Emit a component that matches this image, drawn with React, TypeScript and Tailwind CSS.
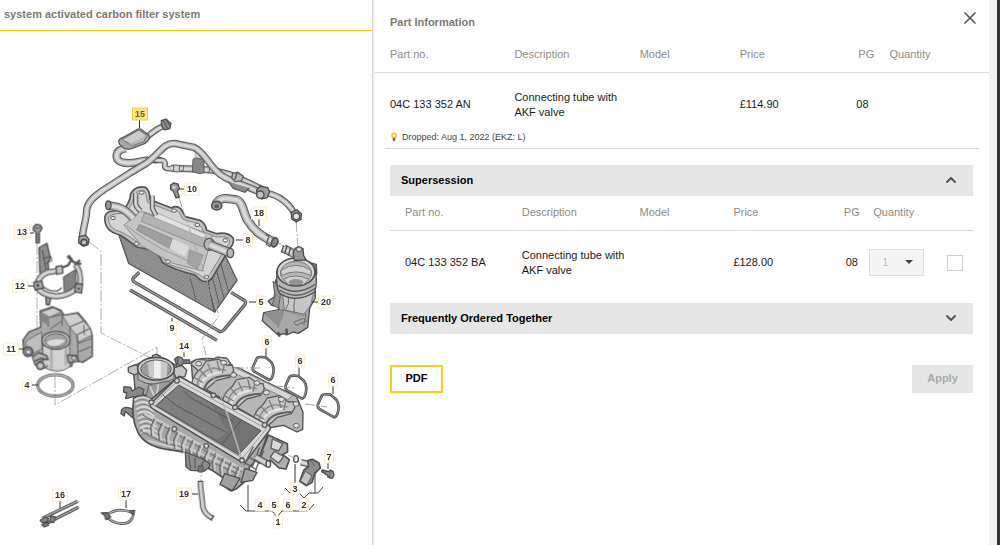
import React, { useState } from "react";
import { X, ChevronUp, ChevronDown } from "lucide-react";

interface Callout {
  no: string;
  x: number;
  y: number;
  line?: string;
  active?: boolean;
}

const callouts: Callout[] = [
  { no: "15", x: 140, y: 114, line: "M139.5 120v8", active: true },
  { no: "10", x: 192, y: 189, line: "M179 189h7" },
  { no: "18", x: 259, y: 213, line: "M259 219v7" },
  { no: "8", x: 248, y: 240, line: "M236 240h8" },
  { no: "13", x: 22, y: 232, line: "M28 233h6" },
  { no: "12", x: 20, y: 286, line: "M26 286h8" },
  { no: "11", x: 11, y: 349, line: "M17 349h7" },
  { no: "4", x: 27, y: 385, line: "M31 385h7" },
  { no: "5", x: 261, y: 302, line: "M249 302h8" },
  { no: "20", x: 326, y: 302, line: "M312 302h8" },
  { no: "9", x: 172, y: 328, line: "M172 318v5" },
  { no: "14", x: 184, y: 346, line: "M184 351v6" },
  { no: "6", x: 267, y: 342, line: "M266 348v8" },
  { no: "6", x: 300, y: 361, line: "M299 367v8" },
  { no: "6", x: 333, y: 380, line: "M333 386v8" },
  { no: "7", x: 329, y: 457, line: "M328 463v6" },
  { no: "3", x: 295, y: 489, line: "M295 464v19" },
  { no: "19", x: 184, y: 494, line: "M190 494h8" },
  { no: "16", x: 60, y: 495, line: "M60 501v7" },
  { no: "17", x: 126, y: 494, line: "M126 500v8" },
  { no: "4", x: 260, y: 505 },
  { no: "5", x: 274, y: 505 },
  { no: "6", x: 288, y: 505 },
  { no: "2", x: 304, y: 505 },
  { no: "1", x: 278, y: 522 },
];

// tube drawn as outline + body + highlight
function Pipe({ d, w }: { d: string; w: number }) {
  return (
    <g fill="none" strokeLinejoin="round">
      <path d={d} stroke="#3c3c3c" strokeWidth={w} />
      <path d={d} stroke="#a3a3a3" strokeWidth={w - 6} />
      <path d={d} stroke="#d3d3d3" strokeWidth={(w - 5) / 2} />
    </g>
  );
}

function Tubes() {
  return (
    <g transform="translate(70 100) scale(.33333)">
      <Pipe w={19} d="M226 116C244 100 254 88 286 76" />
      <path d="M274 62l14-5 15 14-4 15-16 3-8-10z" fill="#777" stroke="#333" strokeWidth="4" />
      <path d="M280 62l12 22M289 59l10 18" stroke="#333" strokeWidth="3" />
      <Pipe w={25} d="M168 145C132 148 132 184 160 188C190 193 200 184 235 181" />
      <Pipe w={17} d="M228 181H276Q289 184 284 198Q284 207 302 206" />
      <path d="M235 175l40-2M232 186l30 2" stroke="#333" strokeWidth="4" />
      <path d="M146 124q2-8 14-12l45-25q8-1 11 3l20 15q6 8-2 17l-9 8-40 16q-16 4-24-2l-13-12z" fill="#9a9a9a" stroke="#444" strokeWidth="4" />
      <path d="M157 117l50-27 24 16-9 19-37 13z" fill="#aaa" stroke="#5c5c5c" strokeWidth="3" />
      <path d="M160 119l46-26 20 15-42 21z" fill="#c4c4c4" />
      <Pipe w={21} d="M302 205L375 207L430 211L480 224L530 246L590 275" />
      <path d="M311 195l17 1v20l-17-1zM341 198l-3 18M420 203l-4 17" fill="#ccc" stroke="#444" strokeWidth="3" />
      <path d="M376 157h16l9 10-3 14h-24z" fill="#d2d2d2" stroke="#888" strokeWidth="2" />
      <path d="M369 178l10-4 23 5v39l-10 3-25-5z" fill="#747474" stroke="#444" strokeWidth="3" />
      <Pipe w={22} d="M38 415C34 400 51 355 50 330C53 302 80 285 100 270L180 219L230 189C270 160 280 129 313 130L372 142C405 158 412 190 450 223C480 246 520 252 572 278" />
      <path d="M475 245l15 20 35 12 13-13" fill="#777" stroke="#444" strokeWidth="4" />
      <path d="M488 220l15-3 17 12-6 14-19 2-10-11zM502 219l-8 20" fill="#aaa" stroke="#444" strokeWidth="4" />
      <Pipe w={20} d="M572 278C610 277 654 302 674 342" />
      <path d="M560 270l10-11 23 4 6 14-8 16-17 4-13-9z" fill="#909090" stroke="#333" strokeWidth="4" />
      <circle cx="571" cy="284" r="11" fill="#bbb" stroke="#333" strokeWidth="4" />
      <path d="M664 336l17-7 13 12-1 17-14 8-14-9z" fill="#888" stroke="#333" strokeWidth="4" />
      <circle cx="679" cy="349" r="10" fill="#ddd" stroke="#333" strokeWidth="4" />
      <path d="M27 410l20-4 10 12-3 16-14 5-14-10z" fill="#9c9c9c" stroke="#333" strokeWidth="4" />
      <circle cx="42" cy="427" r="9" fill="#bbb" stroke="#333" strokeWidth="5" />
      {/* hose 18 */}
      <Pipe w={27} d="M437 313C452 284 483 299 499 299C522 307 519 345 535 364C550 390 570 405 607 424" />
      <ellipse cx="440" cy="317" rx="15" ry="13" fill="#8a8a8a" stroke="#333" strokeWidth="5" />
      <ellipse cx="440" cy="319" rx="7" ry="6" fill="#444" />
      <path d="M588 405l9 2-8 26 11 7 16-29" fill="none" stroke="#444" strokeWidth="4" />
      <ellipse cx="614" cy="427" rx="9" ry="14" fill="#777" stroke="#333" strokeWidth="5" transform="rotate(20 614 427)" />
      {/* screw 10 */}
      <path d="M302 255l9-6 13 3 4 13-6 9 6 17-10 3-8-20-8-6z" fill="#888" stroke="#333" strokeWidth="4" />
      <circle cx="312" cy="262" r="5" fill="#ccc" />
    </g>
  );
}

function Cooler() {
  return (
    <g transform="translate(100 175) scale(.33333)" strokeLinejoin="round">
      <path d="M56 178l30 87 258 146-18-92z" fill="#959595" stroke="#333" strokeWidth="4" />
      <path d="M56 178l30 87 258 146-18-92z" fill="url(#fins)" />
      <path d="M324 318l52-76 35 74-67 95z" fill="#a2a2a2" stroke="#333" strokeWidth="4" />
      <path d="M324 318l52-76 35 74-67 95z" fill="url(#fins)" />
      <path d="M336 302l23 90M349 283l24 90M362 264l24 88M270 308l18 66" stroke="#444" strokeWidth="3" fill="none" />
      <path
        d="M15 124Q20 108 40 108L68 104Q90 88 92 56Q108 30 136 37Q150 45 150 74L215 99Q228 90 243 102L256 125L300 136Q317 146 320 166L350 176Q384 170 400 190Q403 207 388 221L338 306Q323 330 299 313L285 300Q220 284 188 263Q176 236 156 225L110 216Q80 192 60 180Q10 168 15 124Z"
        fill="#b7b7b7"
        stroke="#383838"
        strokeWidth="5"
      />
      <path
        d="M25 128Q28 117 70 114Q98 98 102 62Q114 42 132 47Q140 55 142 82L215 110Q232 102 238 114L249 133L294 146Q308 158 312 173L350 186Q380 182 390 194Q390 207 377 218L330 298Q320 314 304 304Q290 290 224 274Q200 267 191 250Q180 226 155 214L116 205Q90 183 66 172Q24 162 25 128Z"
        fill="#cdcdcd"
        stroke="#727272"
        strokeWidth="3"
      />
      <path d="M72 150l50-42 215 72-30 108-92-24-90-52z" fill="#bababa" stroke="#777" strokeWidth="3" />
      <path d="M134 113l186 77-12 26-184-77z" fill="#a6a6a6" stroke="#666" strokeWidth="2" />
      <path d="M168 112l150 66-6 12-153-64z" fill="#dedede" stroke="#888" strokeWidth="2" />
      <path d="M118 148l100 44-10 28-98-55z" fill="#909090" stroke="#666" strokeWidth="2" />
      <path d="M218 192l50 22-12 32-48-26z" fill="#d4d4d4" />
      <path d="M268 224l42 17-17 40-30-15z" fill="#949494" stroke="#777" strokeWidth="2" />
      <path d="M80 152q40 34 110 72l85 38" fill="none" stroke="#888" strokeWidth="3" />
      <Pipe w={26} d="M24 91L55 97Q80 105 100 130" />
      <ellipse cx="25" cy="91" rx="8" ry="13" fill="#888" stroke="#333" strokeWidth="4" />
      <Pipe w={16} d="M107 54V85Q107 96 122 108" />
      <Pipe w={15} d="M157 62V100L168 122" />
      <ellipse cx="328" cy="208" rx="16" ry="18" fill="#a8a8a8" stroke="#444" strokeWidth="4" />
      <Pipe w={28} d="M328 209L388 233" />
      <ellipse cx="391" cy="234" rx="10" ry="14" fill="#aaa" stroke="#333" strokeWidth="4" />
      {[[39, 129], [125, 53], [222, 107], [292, 150], [376, 196], [319, 306], [204, 260], [110, 206]].map(([x, y]) => (
        <ellipse key={x} cx={x} cy={y} rx="7" ry="5" fill="#efefef" stroke="#444" strokeWidth="3" />
      ))}
      {/* seal frame 5 and rod 9 */}
      {["M118 292L101 308Q94 316 106 323L355 467Q366 473 373 463L435 388Q440 380 431 375L393 352", "M90 345L351 496"].map((d) => (
        <g key={d} fill="none">
          <path d={d} stroke="#333" strokeWidth="10" />
          <path d={d} stroke="#8d8d8d" strokeWidth="4" />
        </g>
      ))}
    </g>
  );
}

function Regulator() {
  return (
    <g transform="translate(100 175) scale(.33333)" strokeLinejoin="round">
      <path d="M527 315l-4 50-18 13 10 13 20 4 3 9-47 9-4 24 47 43 18-4 8 4 20-9 15 4 28-18 6-58 17-30 0-37z" fill="#999" stroke="#333" strokeWidth="4" />
      <path d="M519 318l25 25-9 58-18-14 8-24z" fill="#838383" stroke="#444" strokeWidth="3" />
      <path d="M547 350q40 26 95-2l-10 42-24 32-55-17z" fill="#bdbdbd" stroke="#666" strokeWidth="3" />
      <path d="M565 367q5 20-8 35M585 370q-6 24-2 43M493 417l57-13 68 15M550 405l-16 54M618 419l-7 32M581 441l30-11 9 8-32 13z" fill="none" stroke="#555" strokeWidth="3" />
      <path d="M498 412l42-7 12 11-16 40-39-35z" fill="#7d7d7d" />
      <path d="M534 471l5 14M559 461l2 19" stroke="#333" strokeWidth="7" />
      <path d="M628 263l21 5 1 30-12-7z" fill="#777" stroke="#333" strokeWidth="4" />
      <path d="M531 290q-4 48 8 65 50 32 105-4 10-30 1-70z" fill="#adadad" stroke="#333" strokeWidth="4" />
      <path d="M535 331q52 37 110-3M538 345q54 34 107-5" stroke="#444" strokeWidth="4" fill="none" />
      <ellipse cx="588" cy="291" rx="57" ry="42" fill="#d0d0d0" stroke="#333" strokeWidth="5" />
      <ellipse cx="588" cy="294" rx="47" ry="35" fill="#a8a8a8" stroke="#666" strokeWidth="3" />
      <path d="M543 286q45-30 90 0v16q-45-23-89 0zM551 313q34-20 75 0l-14 15h-48z" fill="#c9c9c9" stroke="#666" strokeWidth="3" />
      <ellipse cx="588" cy="321" rx="22" ry="9" fill="#808080" />
      <Pipe w={26} d="M551 220L589 240" />
      <path d="M551 211l-7 22M561 213l-7 23M572 218l-7 24" stroke="#333" strokeWidth="4" />
      <path d="M586 220l10-5 13 6 2 21 8 13-36 1-4-23z" fill="#888" stroke="#333" strokeWidth="4" />
      <ellipse cx="597" cy="223" rx="8" ry="7" fill="#ccc" stroke="#444" strokeWidth="3" />
    </g>
  );
}

function Throttle() {
  return (
    <g transform="translate(0 215) scale(.33333)" strokeLinejoin="round">
      {/* screw 13 */}
      <path d="M100 36l8-8 13 2 5 9-4 9-4 2v33h-10V51l-8-5z" fill="#929292" stroke="#333" strokeWidth="4" />
      <path d="M107 58h12M107 66h12M107 74h12M102 40l20-2" stroke="#333" strokeWidth="3" />
      {/* bracket 12 */}
      <Pipe w={17} d="M225 148Q246 168 240 214" />
      <path d="M117 98l24-13 10 44-7 13 3 35-27 8z" fill="#7d7d7d" stroke="#333" strokeWidth="4" />
      <path d="M128 131l24-7 4 13-18 8M127 104l11 60" fill="none" stroke="#333" strokeWidth="3" />
      <path d="M137 247h16l-5 22h-9z" fill="#8a8a8a" stroke="#333" strokeWidth="4" />
      <Pipe w={18} d="M112 205Q118 182 142 172L178 166" />
      <path d="M190 186l36-22 4 52-36 28z" fill="#6f6f6f" stroke="#333" strokeWidth="3" />
      <Pipe w={19} d="M110 212Q122 240 168 244Q206 242 232 218" />
      <path d="M126 212q20 18 46 16l14-10" fill="none" stroke="#444" strokeWidth="4" />
      <path d="M168 155l18-3 3 22-19 4z" fill="#bbb" stroke="#333" strokeWidth="4" />
      <path d="M186 158l18-7 10-16-12-12M206 121l14 20 24 6M224 150l16-15" fill="none" stroke="#3a3a3a" strokeWidth="7" />
      <path d="M101 201l25-3 4 21-25 5zM227 206l20 1-2 27-21-4z" fill="#9a9a9a" stroke="#333" strokeWidth="4" />
      <circle cx="114" cy="211" r="4" fill="#333" />
      <circle cx="236" cy="221" r="4" fill="#333" />
      {/* body 11 */}
      <path d="M120 288l38-13 25 11 9 14 42-7 20 23 18 27 5 18v63l-29 18-28-7-5 19-54 7-56-12-10-31-24-12-2-31 17-24 36-15z" fill="#9a9a9a" stroke="#333" strokeWidth="4" />
      <path d="M122 291l38-13 23 13-34 16zM187 302l44-7 20 23-42 18zM209 336l42-18 20 22-42 20zM229 360l41-20 6 20-40 21z" fill="#c6c6c6" stroke="#555" strokeWidth="3" />
      <path d="M149 307l38-9-1 35M130 302l15 9v24M209 336l2 30M232 360l3 83M235 385l43-16M234 411l44-18M251 330l2 30M186 317l-36 26" fill="none" stroke="#444" strokeWidth="3" />
      <path d="M122 296l25 13v22l-25-13z" fill="#727272" />
      <path d="M77 378l48-27v52l-42 19z" fill="#b4b4b4" stroke="#555" strokeWidth="3" />
      <path d="M128 376q1 50 0 80 47 25 82-1l-2-82z" fill="#cbcbcb" stroke="#444" strokeWidth="3" />
      <path d="M154 397v66M198 386v65" stroke="#a4a4a4" strokeWidth="9" />
      <ellipse cx="168" cy="376" rx="42" ry="27" fill="#c0c0c0" stroke="#333" strokeWidth="4" />
      <ellipse cx="168" cy="377" rx="34" ry="21" fill="#979797" stroke="#444" strokeWidth="3" />
      <path d="M136 381q26-17 64-7-21 27-52 19z" fill="#d4d4d4" stroke="#666" strokeWidth="2" />
      <circle cx="84" cy="410" r="14" fill="#888" stroke="#333" strokeWidth="5" />
      <circle cx="85" cy="411" r="7" fill="#ddd" stroke="#333" strokeWidth="3" />
      <Pipe w={26} d="M139 443L122 451" />
      <circle cx="121" cy="452" r="11" fill="#bbb" stroke="#333" strokeWidth="5" />
      <path d="M99 424l17-11 24 9 5 12-22-4-19 8M202 420l29 2 3 17-28 4z" fill="#a4a4a4" stroke="#333" strokeWidth="4" />
      <circle cx="221" cy="429" r="6" fill="#ddd" stroke="#333" strokeWidth="3" />
      {/* o-ring 4 */}
      <ellipse cx="166" cy="511" rx="53" ry="32" fill="none" stroke="#333" strokeWidth="9" />
      <ellipse cx="166" cy="511" rx="53" ry="32" fill="none" stroke="#bbb" strokeWidth="4" />
    </g>
  );
}

// one intake runner, repeated three times along the manifold
function Runner({ x, y }: { x: number; y: number }) {
  return (
    <g transform={`translate(${x} ${y})`}>
      <path d="M-3 64Q1 35 27 16L40-4 78-11 103 8 119 7 123 24 112 43 70 54 38 83z" fill="#bcbcbc" stroke="#444" strokeWidth="4" />
      <path d="M14 71Q16 27 63 16L101 23" fill="none" stroke="#777" strokeWidth="4" />
      <path d="M34 83Q42 40 112 38" fill="none" stroke="#444" strokeWidth="6" />
      <path d="M23 76Q28 34 86 28" fill="none" stroke="#e2e2e2" strokeWidth="6" />
      <path d="M2 43l29 17M20 20l21 23M45 3l13 28M73-6l8 32M95 6l-6 26" stroke="#666" strokeWidth="4" />
    </g>
  );
}

function Manifold() {
  return (
    <g transform="translate(110 335) scale(.33333)" strokeLinejoin="round">
      {/* throttle flange */}
      <path d="M69 93l6 68 30 21 72-30 36-25-15-37-58-28z" fill="#979797" stroke="#333" strokeWidth="4" />
      <path d="M55 97l19-7 14 6-3 18-12 6-18-9zM127 62l12-4 13 6v16l-12 5-12-6zM186 100l29-9 15 15-5 19-27 4z" fill="#bcbcbc" stroke="#333" strokeWidth="4" />
      <path d="M84 104v30q50 30 108-3v-30z" fill="#afafaf" stroke="#444" strokeWidth="3" />
      <ellipse cx="138" cy="101" rx="55" ry="34" fill="#c8c8c8" stroke="#333" strokeWidth="5" />
      <ellipse cx="138" cy="102" rx="46" ry="27" fill="#8c8c8c" stroke="#444" strokeWidth="3" />
      <path d="M112 83q28-14 61 2l-3 41q-27 9-52-1z" fill="#c0c0c0" />
      <path d="M132 78v51h20V78z" fill="#ededed" />
      <path d="M42 155l20 2 5 11 20-12 15 8-6 23-25-2-24 6 3-17-9-3zM35 224q10-14 35 0l18 22-8 12-35-29-2 14-10-7z" fill="#757575" stroke="#333" strokeWidth="4" />
      <path d="M116 150l58-12 20 20-33 49-55-12z" fill="#8a8a8a" stroke="#444" strokeWidth="3" />
      <path d="M120 154l20 46M145 148l-8 50" stroke="#ccc" strokeWidth="5" />
      {/* cylinder head flange */}
      <path d="M244 81q17-14 68-10l35-2 17 19-2 9 26 2 75 39 96 46 20 48-1 51-17 8-40-20-47 8-56-40-170-99z" fill="#acacac" stroke="#333" strokeWidth="4" />
      <path d="M364 94l28 12 155 75-12 14-160-80z" fill="#d0d0d0" stroke="#777" strokeWidth="3" />
      <path d="M242 86l18-13 43 3 19-10 29 4 10 15-13 19-41-3-42 6z" fill="#c4c4c4" stroke="#444" strokeWidth="4" />
      <Runner x={248} y={83} />
      <Runner x={340} y={138} />
      <Runner x={432} y={193} />
      {[[266, 86], [341, 83], [371, 120], [441, 144], [469, 173], [514, 193], [559, 272], [558, 207]].map(([x, y]) => (
        <ellipse key={`${x}-${y}`} cx={x} cy={y} rx="9" ry="7" fill="#d8d8d8" stroke="#444" strokeWidth="3" />
      ))}
      {/* intercooler housing */}
      <path
        d="M71 190Q89 174 123 193L208 124 478 276 466 318 450 363 418 397 408 437 380 461 363 468 338 451 343 431 308 407 248 375 228 352 176 344Q104 334 84 292Q62 251 71 190Z"
        fill="#9a9a9a"
        stroke="#333"
        strokeWidth="5"
      />
      {[0, 1, 2, 3, 4, 5, 6, 7].map((i) => (
        <path key={i} d={`M${73 + i * 3} ${195 + i * 14}q26-18 51 ${2 + i * 2}`} fill="none" stroke="#cfcfcf" strokeWidth="6" />
      ))}
      {[0, 1, 2, 3, 4, 5, 6, 7].map((i) => (
        <path key={i} d={`M${73 + i * 3} ${202 + i * 14}q26-18 51 ${2 + i * 2}`} fill="none" stroke="#5a5a5a" strokeWidth="2" />
      ))}
      <path d="M103 235l34 16 262 152M93 278q60 40 115 48l178 83M115 317q60 19 110 24" fill="none" stroke="#c5c5c5" strokeWidth="5" />
      <path d="M99 241l34 17 262 153M90 286q60 40 115 48l178 83" fill="none" stroke="#555" strokeWidth="3" />
      {[0, 1, 2, 3, 4, 5, 6, 7, 8, 9, 10, 11].map((i) => (
        <g key={i}>
          <path d={`M${133 + i * 23} ${251 + i * 13}l-11 26 3 26`} fill="none" stroke="#555" strokeWidth="4" />
          <path d={`M${139 + i * 23} ${256 + i * 13}l-10 24 2 23`} fill="none" stroke="#c4c4c4" strokeWidth="5" />
        </g>
      ))}
      <path d="M123 206l78-77q7-5 15 0l259 142q9 7 4 14l-70 93q-8 7-18 1L128 221q-11-7-5-15z" fill="#d2d2d2" stroke="#333" strokeWidth="4" />
      <path d="M128 209l77-73 264 145-72 89z" fill="none" stroke="#8b8b8b" strokeWidth="3" />
      <path d="M137 212l70-62 246 137-67 72z" fill="#5c5c5c" stroke="#333" strokeWidth="3" />
      <path d="M143 212l64-59 100 57 45 80-30 24z" fill="#727272" opacity=".7" />
      <path d="M158 180l45 34 145 78M220 167l20 20 130 72M392 258l-55 69" fill="none" stroke="#383838" strokeWidth="3" />
      <path d="M349 228l43 134" stroke="#a6a6a6" strokeWidth="5" />
      {[[201, 137], [124, 202], [310, 181], [375, 217], [464, 270], [193, 282], [289, 333], [396, 376]].map(([x, y]) => (
        <circle key={x} cx={x} cy={y} r="7" fill="#ccc" stroke="#444" strokeWidth="4" />
      ))}
      {/* right side bracket and port */}
      <path d="M475 300l57 26 1 24-15 9 20 15-10 28-21-3-26-24-9 12-28-9 14-35z" fill="#a0a0a0" stroke="#333" strokeWidth="5" />
      <path d="M487 312l31 14-12 22-23-8zM493 349l28 15-15 20-25-18z" fill="#d7d7d7" stroke="#444" strokeWidth="4" />
      <path d="M430 335l-28 55M449 337l-23 61M461 347l-25 60M413 365l38 21M404 383l37 22" stroke="#4a4a4a" strokeWidth="4" />
      <Pipe w={20} d="M437 366L473 387" />
      <ellipse cx="475" cy="387" rx="7" ry="10" fill="#ddd" stroke="#333" strokeWidth="4" />
      {/* feet and drain */}
      <path d="M226 351l50 20 24 15-2 10-15 12-42-2-13-11z" fill="#7d7d7d" stroke="#333" strokeWidth="4" />
      <path d="M236 360l6 40M255 368v34M280 378l-8 28" stroke="#444" strokeWidth="4" />
      <path d="M265 393h14v18h-14z" fill="#666" stroke="#333" strokeWidth="3" />
      <path d="M344 416l46 14-23 37-37-19zM405 400l36 12-13 24-35 6z" fill="#929292" stroke="#333" strokeWidth="4" />
      {/* runner gaskets 6 */}
      {[[427, 65], [525, 121], [622, 177]].map(([x, y]) => (
        <g key={x} transform={`translate(${x} ${y})`} fill="none">
          <path d="M14 4Q20-1 40 2L57 17Q66 30 63 49Q60 68 51 70L6 45Q-2 38 3 28z" stroke="#333" strokeWidth="8" />
          <path d="M14 4Q20-1 40 2L57 17Q66 30 63 49Q60 68 51 70L6 45Q-2 38 3 28z" stroke="#aaa" strokeWidth="2" />
        </g>
      ))}
      {/* screw 14 */}
      <path d="M194 72l9-7 12 3 4 6 20 1v10l-20 1-7 6-12-3z" fill="#777" stroke="#333" strokeWidth="4" />
      <path d="M222 75v10M229 75v10M203 69v18" stroke="#333" strokeWidth="3" />
      {/* sensor 2, ring 3, screw 7 */}
      <ellipse cx="558" cy="372" rx="7" ry="10" fill="#fff" stroke="#333" strokeWidth="4" />
      <Pipe w={20} d="M573 382L598 388" />
      <path d="M593 377l14-4 20 11 4 15-17 17-8 26-17 10-20-13 13-34 14-11z" fill="#7b7b7b" stroke="#333" strokeWidth="5" />
      <path d="M586 409l20 13-15 28-20-12zM604 379l10 15" fill="#bbb" stroke="#444" strokeWidth="3" />
      <path d="M636 405l21 5 3-5 9 4 3 12-6 9-12-3-1-6-18-11z" fill="#888" stroke="#333" strokeWidth="4" />
      <path d="M642 405l-2 7M649 407l-3 9M661 408l-3 19" stroke="#333" strokeWidth="3" />
    </g>
  );
}

function SmallParts() {
  return (
    <g transform="translate(0 470) scale(.33333)" strokeLinejoin="round">
      <Pipe w={17} d="M601 36C602 70 608 91 608 108Q611 132 639 145" />
      <path d="M593 34h17M633 151l8-14" stroke="#333" strokeWidth="4" />
      <path d="M128 145l105-51M135 163l100-51" stroke="#333" strokeWidth="10" />
      <path d="M130 143l102-49M137 162l97-50" stroke="#999" strokeWidth="4" />
      <path d="M121 151l15-10 10 5-5 10-15 2zM126 164l18-7 1 9-12 5zM151 138l15 3-5 17-10-2z" fill="#777" stroke="#333" strokeWidth="4" />
      <path d="M320 135q30-23 70-10l10 6q-4 32-37 30-23-2-43-19z" fill="none" stroke="#333" strokeWidth="8" />
      <path d="M320 135q30-23 70-10l10 6q-4 32-37 30-23-2-43-19z" fill="none" stroke="#c5c5c5" strokeWidth="3" />
      <path d="M304 129l18-1 10 13-14 8-5-13zM389 123l15-2-4 14z" fill="#666" stroke="#333" strokeWidth="4" />
    </g>
  );
}

function PartsDiagram() {
  return (
    <svg viewBox="0 31 372 510" className="block w-full" role="img" aria-label="Exploded parts diagram">
      <defs>
        <pattern id="fins" width="7" height="7" patternUnits="userSpaceOnUse" patternTransform="rotate(29)">
          <path d="M0 2h7M2 0v7" stroke="#606060" strokeWidth="2" />
        </pattern>
      </defs>
      <g fill="none" stroke="#b0b0b0" strokeWidth="1" strokeDasharray="12 2 2 2">
        <path d="M37 243v96M89 242l12 9v82l54 27M55 376v29l102-58v8" />
        <path d="M296 220l2 28M277 242l8 5M201 461v20" />
      </g>
      <g opacity=".86">
        <Throttle />
        <Cooler />
        <Tubes />
        <Regulator />
        <Manifold />
        <SmallParts />
      </g>
      <g fill="none" stroke="#aaa" strokeWidth="1" strokeDasharray="10 2 2 2">
        <path d="M179 198l40 118-17 23 5 20 20 56M234 368h28M276 386l18 2M305 404l22 3M288 455l8 4" />
      </g>
      <g fill="none" stroke="#444" strokeWidth="1">
        <path d="M240 505l6 6h26l5 6 5-6h26l6-7M248 485v26M285 488l5 5h9l5 5 5-5h9l5-6M315 472v21" />
      </g>
      {callouts.map((c, i) => {
        const w = c.no.length > 1 ? 15 : 9;
        return (
          <g key={i}>
            {c.line && <path d={c.line} stroke="#333" strokeWidth="1" fill="none" />}
            <rect
              x={c.x - w / 2}
              y={c.y - 6}
              width={w}
              height="12"
              fill={c.active ? "#ffe58a" : "#fffefb"}
              stroke={c.active ? "#f2cb45" : "#fdedc9"}
            />
            <text x={c.x} y={c.y + 3} textAnchor="middle" fontSize="9" fontWeight="700" fill={c.active ? "#6b5a1e" : "#333"}>
              {c.no}
            </text>
          </g>
        );
      })}
    </svg>
  );
}

function BulbIcon() {
  return (
    <svg viewBox="0 0 8 10" className="h-[10px] w-2" aria-hidden="true">
      <circle cx="4" cy="3.4" r="2.9" fill="#f6bd3c" />
      <circle cx="4" cy="3.2" r="1.4" fill="#fff0b5" />
      <path d="M2.7 6h2.6v2L4 9.5 2.7 8z" fill="#7c6a48" />
    </svg>
  );
}

function SectionBar({ title, open, onToggle }: { title: string; open: boolean; onToggle: () => void }) {
  const Icon = open ? ChevronUp : ChevronDown;
  return (
    <button
      type="button"
      aria-expanded={open}
      onClick={onToggle}
      className="flex h-[31px] w-full items-center justify-between bg-[#e6e6e6] pr-[14px] pl-[11px] text-left font-bold text-black"
    >
      {title}
      <Icon className="size-4 text-[#555]" strokeWidth={3} />
    </button>
  );
}

export default function App() {
  const [showSupersession, setShowSupersession] = useState(true);
  const [showTogether, setShowTogether] = useState(false);

  return (
    <div className="flex min-h-screen bg-white font-['Liberation_Sans',Arial,sans-serif] text-[11px] leading-[15px] text-[#1a1a1a]">
      <section className="w-[37.3%] shrink-0 border-r border-[#d6d6d6]">
        <h1 className="h-[31px] overflow-hidden border-b border-[#fbc800] pt-[7px] pl-1 font-bold whitespace-nowrap text-[#7d7a70]">
          system activated carbon filter system
        </h1>
        <PartsDiagram />
      </section>
      <div className="w-[2px] shrink-0 bg-[#f1f1f1]" />

      <main className="min-w-0 flex-1">
        <header className="flex h-[38px] items-start justify-between pr-[9px] pl-[15px]">
          <h2 className="pt-[15px] font-bold text-[#7d7a70]">Part Information</h2>
          <button type="button" aria-label="Close" className="mt-2 text-[#555]">
            <X className="size-5" strokeWidth={2} />
          </button>
        </header>

        <table className="w-full table-fixed border-collapse text-left">
          <colgroup>
            <col className="w-[22.7%]" />
            <col className="w-[20.4%]" />
            <col className="w-[16.3%]" />
            <col className="w-[19%]" />
            <col className="w-[5.4%]" />
            <col />
          </colgroup>
          <thead>
            <tr className="h-[34px] border-b border-[#d9d9d9] text-[#8e8c84] *:font-normal">
              <th className="pl-[15px]">Part no.</th>
              <th>Description</th>
              <th>Model</th>
              <th>Price</th>
              <th className="pl-[2px]">PG</th>
              <th>Quantity</th>
            </tr>
          </thead>
          <tbody>
            <tr className="*:pt-[17px] *:pb-[9px]">
              <td className="pl-[15px]">04C 133 352 AN</td>
              <td className="pr-4">Connecting tube with AKF valve</td>
              <td></td>
              <td>£114.90</td>
              <td>08</td>
              <td></td>
            </tr>
          </tbody>
        </table>
        <p className="mx-[10px] flex h-5 items-start gap-1 border-b border-[#d9d9d9] pl-[5px] text-[9px] leading-4 text-[#444]">
          <span className="pt-[3px]">
            <BulbIcon />
          </span>
          Dropped: Aug 1, 2022 (EKZ: L)
        </p>

        <div className="mr-4 ml-[15px] mt-4">
          <SectionBar title="Supersession" open={showSupersession} onToggle={() => setShowSupersession(!showSupersession)} />
          {showSupersession && (
            <table className="w-full table-fixed border-collapse text-left">
              <colgroup>
                <col className="w-[22.6%]" />
                <col className="w-[20.2%]" />
                <col className="w-[16.1%]" />
                <col className="w-[18.7%]" />
                <col className="w-[4.6%]" />
                <col className="w-[13.2%]" />
                <col />
              </colgroup>
              <thead>
                <tr className="h-[35px] border-b border-[#d9d9d9] text-[#8e8c84] *:font-normal">
                  <th className="pl-[15px]">Part no.</th>
                  <th>Description</th>
                  <th>Model</th>
                  <th>Price</th>
                  <th className="pr-2 text-center">PG</th>
                  <th className="pl-1">Quantity</th>
                  <th></th>
                </tr>
              </thead>
              <tbody>
                <tr className="h-16">
                  <td className="pl-[15px]">04C 133 352 BA</td>
                  <td className="pr-2">Connecting tube with AKF valve</td>
                  <td></td>
                  <td>£128.00</td>
                  <td className="pr-2 text-center">08</td>
                  <td>
                    <div className="relative w-[55px]">
                      <select
                        aria-label="Quantity"
                        disabled
                        defaultValue="1"
                        className="block h-[27px] w-full appearance-none border border-[#dedede] bg-[#f5f5f5] pl-3 text-[#bbb]"
                      >
                        <option value="1">1</option>
                      </select>
                      <svg viewBox="0 0 8 4" className="pointer-events-none absolute top-[11px] right-[11px] h-1 w-2" aria-hidden="true">
                        <path d="M0 0h8L4 4z" fill="#444" />
                      </svg>
                    </div>
                  </td>
                  <td className="pr-[10px]">
                    <input
                      type="checkbox"
                      aria-label="Select 04C 133 352 BA"
                      className="ml-auto block size-4 appearance-none border border-[#cfcfcf] bg-white checked:bg-[#fbc800]"
                    />
                  </td>
                </tr>
              </tbody>
            </table>
          )}
          <div className="mt-2">
            <SectionBar title="Frequently Ordered Together" open={showTogether} onToggle={() => setShowTogether(!showTogether)} />
          </div>
          <div className="mt-[31px] flex items-center justify-between">
            <button type="button" className="h-7 w-[53px] border-2 border-[#f8cb1c] bg-white font-bold text-black">
              PDF
            </button>
            <button type="button" disabled className="h-7 w-[61px] bg-[#e6e6e6] font-bold text-[#a9a9a9]">
              Apply
            </button>
          </div>
        </div>
      </main>

      <div className="w-2 shrink-0 bg-[#f2f2f2]" />
      <div className="w-[3px] shrink-0 bg-[#333]" />
    </div>
  );
}
